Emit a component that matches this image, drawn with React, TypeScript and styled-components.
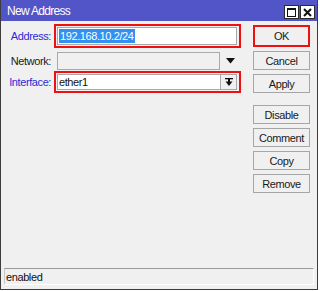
import React from "react";
import styled, { createGlobalStyle } from "styled-components";

const Global = createGlobalStyle`
  html, body { margin: 0; padding: 0; background: #ffffff; }
  body { font-family: "Liberation Sans", Arial, sans-serif; letter-spacing: -0.4px; }
  * { box-sizing: border-box; }
`;

const Window = styled.div`
  width: 318px;
  height: 290px;
  border: 1px solid #3c3c3c;
  border-top: none;
  display: flex;
  flex-direction: column;
  background: #f0f0f0;
`;

const TitleBar = styled.div`
  height: 21px;
  background: #5255c8;
  display: flex;
  align-items: center;
  justify-content: space-between;
  padding: 0 2px 0 6px;
  color: #ffffff;
  font-size: 12px;
  letter-spacing: -0.7px;
`;

const TitleButtons = styled.div`
  display: flex;
  gap: 1px;
  margin-top: 3px;
`;

const TitleButton = styled.div`
  width: 15px;
  height: 14px;
  background: #ffffff;
  border: 1px solid #2a2a2a;
  display: flex;
  align-items: center;
  justify-content: center;
`;

const Body = styled.div`
  flex: 1;
  display: flex;
  padding: 3px 0 0 0;
`;

const Form = styled.div`
  width: 252px;
  display: flex;
  flex-direction: column;
`;

const Row = styled.div<{ $mt: number }>`
  display: grid;
  grid-template-columns: 52px 187px;
  column-gap: 1px;
  align-items: center;
  margin-top: ${(p) => p.$mt}px;
`;

const Label = styled.div<{ $blue?: boolean }>`
  text-align: right;
  font-size: 11px;
  color: ${(p) => (p.$blue ? "#2b2bd6" : "#1a1a1a")};
  padding-right: 2px;
`;

const Highlight = styled.div<{ $pad: number }>`
  border: 2px solid #ee1111;
  padding: ${(p) => p.$pad}px 1px;
  display: flex;
`;

const Plain = styled.div`
  padding: 0 3px;
  display: flex;
  align-items: center;
`;

const Input = styled.div<{ $disabled?: boolean; $w: number; $h: number }>`
  width: ${(p) => p.$w}px;
  height: ${(p) => p.$h}px;
  background: ${(p) => (p.$disabled ? "#f0f0f0" : "#ffffff")};
  border: 1px solid #a9a9a9;
  display: flex;
  align-items: center;
  padding-left: 1px;
  font-size: 11px;
  color: #111;
`;

const Selected = styled.span`
  background: #3390f0;
  color: #ffffff;
  padding: 1px 1px 1px 1px;
`;

const DropButton = styled.div`
  width: 16px;
  height: 16px;
  border: 1px solid #a9a9a9;
  border-left: none;
  background: #f0f0f0;
  display: flex;
  align-items: center;
  justify-content: center;
`;

const ArrowSlot = styled.div`
  width: 16px;
  display: flex;
  align-items: center;
  justify-content: center;
  margin-left: 2px;
`;

const Buttons = styled.div`
  display: flex;
  flex-direction: column;
  padding-top: 1px;
  width: 57px;
`;

const Group = styled.div<{ $mt: number; $gap: number }>`
  display: flex;
  flex-direction: column;
  gap: ${(p) => p.$gap}px;
  margin-top: ${(p) => p.$mt}px;
`;

const Button = styled.div`
  height: 19px;
  border: 1px solid #a6a6a6;
  background: #f0f0f0;
  display: flex;
  align-items: center;
  justify-content: center;
  font-size: 11px;
  color: #1a1a1a;
`;

const OkBox = styled.div`
  border: 2px solid #ee1111;
  height: 22px;
  display: flex;
  align-items: center;
  justify-content: center;
  font-size: 11px;
  color: #1a1a1a;
  background: #f0f0f0;
`;

const StatusWrap = styled.div`
  padding: 0 3px 4px 3px;
`;

const Status = styled.div`
  height: 17px;
  border-top: 1px solid #9a9a9a;
  border-left: 1px solid #c8c8c8;
  border-right: 1px solid #ffffff;
  border-bottom: 1px solid #ffffff;
  display: flex;
  align-items: center;
  padding-left: 1px;
  font-size: 11px;
  color: #111;
`;

const Spacer = styled.div`
  flex: 1;
`;

const DownArrow = () => (
  <svg width="9" height="6" viewBox="0 0 9 6">
    <path d="M0 0 H9 L4.5 5.5 Z" fill="#111" />
  </svg>
);

const DropIcon = () => (
  <svg width="8" height="9" viewBox="0 0 8 9">
    <rect x="0" y="0" width="8" height="1.3" fill="#111" />
    <rect x="3" y="1" width="2" height="3" fill="#111" />
    <path d="M0.5 3.5 H7.5 L4 8 Z" fill="#111" />
  </svg>
);

const MaxIcon = () => (
  <svg width="9" height="9" viewBox="0 0 9 9">
    <rect x="0.5" y="0.5" width="8" height="8" fill="none" stroke="#111" />
    <rect x="0.5" y="0.5" width="8" height="1.5" fill="#111" />
  </svg>
);

const CloseIcon = () => (
  <svg width="9" height="9" viewBox="0 0 9 9">
    <path d="M1 1 L8 8 M8 1 L1 8" stroke="#111" strokeWidth="2" />
  </svg>
);

export default function App() {
  return (
    <>
      <Global />
      <Window>
        <TitleBar>
          <span>New Address</span>
          <TitleButtons>
            <TitleButton>
              <MaxIcon />
            </TitleButton>
            <TitleButton>
              <CloseIcon />
            </TitleButton>
          </TitleButtons>
        </TitleBar>
        <Body>
          <Form>
            <Row $mt={0}>
              <Label $blue>Address:</Label>
              <Highlight $pad={1}>
                <Input $w={180} $h={18}>
                  <Selected>192.168.10.2/24</Selected>
                </Input>
              </Highlight>
            </Row>
            <Row $mt={4}>
              <Label>Network:</Label>
              <Plain>
                <Input $disabled $w={164} $h={18} />
                <ArrowSlot>
                  <DownArrow />
                </ArrowSlot>
              </Plain>
            </Row>
            <Row $mt={1}>
              <Label $blue>Interface:</Label>
              <Highlight $pad={1}>
                <Input $w={164} $h={16}>ether1</Input>
                <DropButton>
                  <DropIcon />
                </DropButton>
              </Highlight>
            </Row>
          </Form>
          <Buttons>
            <Group $mt={0} $gap={4}>
              <OkBox>OK</OkBox>
              <Button>Cancel</Button>
              <Button>Apply</Button>
            </Group>
            <Group $mt={12} $gap={4}>
              <Button>Disable</Button>
              <Button>Comment</Button>
              <Button>Copy</Button>
              <Button>Remove</Button>
            </Group>
          </Buttons>
        </Body>
        <Spacer />
        <StatusWrap>
          <Status>enabled</Status>
        </StatusWrap>
      </Window>
    </>
  );
}
